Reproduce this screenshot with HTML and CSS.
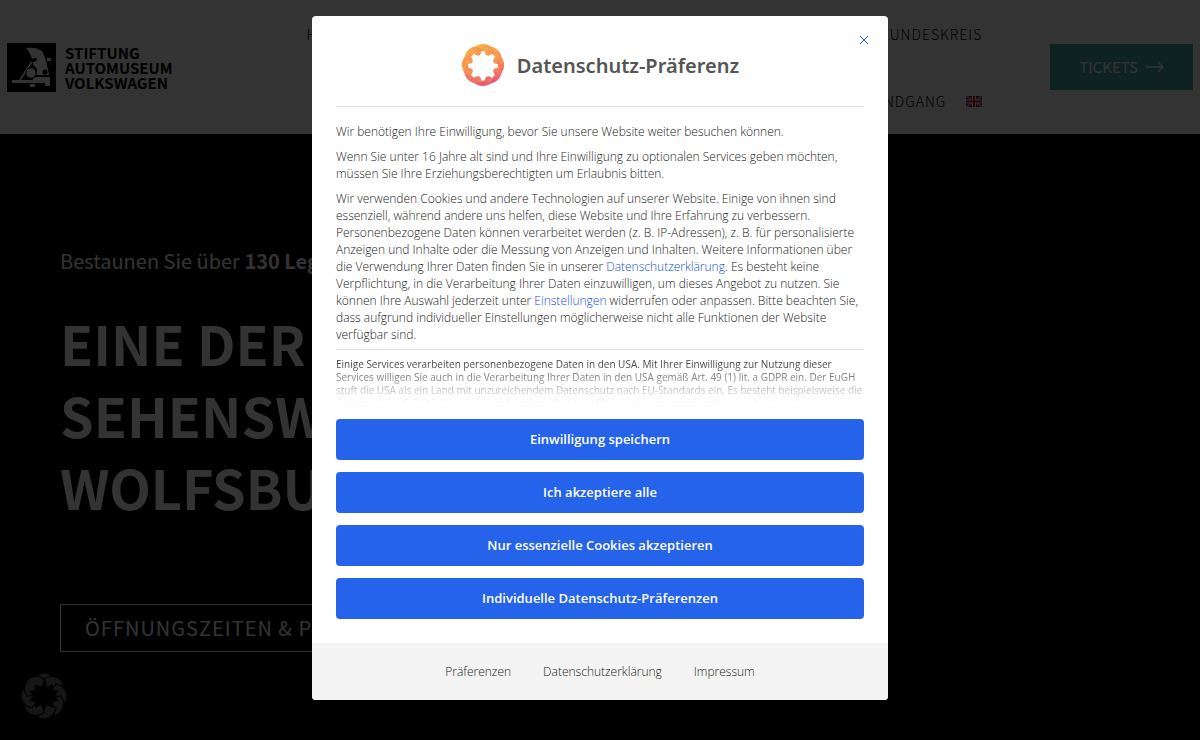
FILE: index.html
```html
<!DOCTYPE html>
<html lang="de">
<head>
<meta charset="utf-8">
<meta name="viewport" content="width=device-width, initial-scale=1">
<title>Stiftung Automuseum Volkswagen</title>
<link rel="stylesheet" href="styles.css">
</head>
<body>
<svg class="defs" width="0" height="0" aria-hidden="true">
  <defs>
    <linearGradient id="warm" gradientUnits="userSpaceOnUse" x1="16" y1="3" x2="28" y2="44">
      <stop offset="0" stop-color="#fdb83c"/><stop offset=".5" stop-color="#fb9550"/><stop offset="1" stop-color="#e5487c"/>
    </linearGradient>
    <linearGradient id="shade" x1="0" y1="0" x2="1" y2="0">
      <stop offset="0" stop-color="#ffd84d" stop-opacity=".25"/><stop offset="1" stop-color="#e5486a" stop-opacity=".3"/>
    </linearGradient>
    <path id="petal" d="M12 12C14 3 22 -1 29 2C35 5 37 10 34 17L28 20L20 18Z"/>
    <path id="gear" d="M22 9h4l1 4 3 1 4-2 3 3-2 4 1 3 4 1v4l-4 1-1 3 2 4-3 3-4-2-3 1-1 4h-4l-1-4-3-1-4 2-3-3 2-4-1-3-4-1v-4l4-1 1-3-2-4 3-3 4 2 3-1z"/>
    <mask id="hole"><path fill="#fff" d="M0 0h48v48H0z"/><use href="#gear" fill="#000"/></mask>
    <mask id="small-hole"><path fill="#fff" d="M0 0h48v48H0z"/><path fill="#000" d="M24 9l3 6 6-3 0 6 6 1-4 5 4 5-6 1 0 6-6-3-3 6-3-6-6 3 0-6-6-1 4-5-4-5 6-1 0-6 6 3z"/></mask>
  </defs>
</svg>

<header class="site-header">
  <a class="brand" href="#" aria-label="Stiftung Automuseum Volkswagen">
    <svg class="brand-mark" viewBox="0 0 49 49" aria-hidden="true">
      <path fill="#000" d="M0 0h49v49H0z"/>
      <path fill="#fff" d="M19 5C25 4 31 5 35 8C38 13 40 20 42 32H29C31 28 30 24 26 22L26 19C24 12 22 8 19 5Z"/>
      <path fill="none" stroke="#fff" stroke-width="1.6" d="M26 17L13 37"/>
      <path fill="#fff" d="M5 37H25L28 34H43V43H38V40H5ZM23 41h5v3h-5zM40 15h4v3h-4z"/>
      <circle cx="24" cy="30" r="5.2" fill="#fff" stroke="#000"/>
      <circle cx="38" cy="29" r="2.6" fill="#000"/>
      <ellipse cx="27" cy="17" rx="3" ry="1.8" fill="#000" transform="rotate(-20 27 17)"/>
    </svg>
    <span class="brand-name">STIFTUNG<br>AUTOMUSEUM<br>VOLKSWAGEN</span>
  </a>
  <nav class="main-nav" aria-label="Hauptmenü">
    <div class="nav-row"><a href="#">HOME</a><a href="#">FREUNDESKREIS</a></div>
    <div class="nav-row nav-end"><a href="#">RUNDGANG</a><a href="#" aria-label="English"><svg class="flag" viewBox="0 0 16 11" aria-hidden="true"><path fill="#206" d="M0 0h16v11H0z"/><path stroke="#fff" stroke-width="2" d="M0 0l16 11M16 0L0 11"/><path stroke="#d22" d="M0 0l16 11M16 0L0 11"/><path stroke="#fff" stroke-width="4" d="M8 0v11M0 5.5h16"/><path stroke="#e11" stroke-width="2" d="M8 0v11M0 5.5h16"/></svg></a></div>
  </nav>
  <a class="tickets" href="#">TICKETS <svg viewBox="0 0 18 12" aria-hidden="true"><path d="M0 6h17M12 1l5 5-5 5"/></svg></a>
</header>

<main class="hero">
  <p class="lead">Bestaunen Sie über <b>130 Legenden</b></p>
  <h1>EINE DER<br>SEHENSWERTEN<br>WOLFSBURGS</h1>
  <a class="hours" href="#">ÖFFNUNGSZEITEN &amp; PREISE</a>
</main>

<button class="privacy-badge" type="button" aria-label="Datenschutz-Präferenzen öffnen">
  <svg viewBox="0 0 48 48" aria-hidden="true"><g mask="url(#small-hole)" fill="#6e6e6e" stroke="#000" stroke-width="1.2">
    <use href="#petal"/><use href="#petal" transform="rotate(45 24 24)"/><use href="#petal" transform="rotate(90 24 24)"/><use href="#petal" transform="rotate(135 24 24)"/><use href="#petal" transform="rotate(180 24 24)"/><use href="#petal" transform="rotate(225 24 24)"/><use href="#petal" transform="rotate(270 24 24)"/><use href="#petal" transform="rotate(315 24 24)"/>
  </g></svg>
</button>

<div class="overlay">
  <section class="dialog" role="dialog" aria-modal="true" aria-labelledby="dialog-title">
    <button class="close" type="button" aria-label="Schließen"><svg viewBox="0 0 10 10" aria-hidden="true"><path d="M1 1l8 8M9 1L1 9"/></svg></button>
    <div class="dialog-body">
      <div class="dialog-head">
        <svg class="dialog-logo" viewBox="0 0 48 48" aria-hidden="true"><g mask="url(#hole)">
          <g fill="url(#warm)"><circle cx="24" cy="24" r="22"/><circle cx="24" cy="14" r="13"/><circle cx="31" cy="17" r="13"/><circle cx="34" cy="24" r="13"/><circle cx="31" cy="31" r="13"/><circle cx="24" cy="34" r="13"/><circle cx="17" cy="31" r="13"/><circle cx="14" cy="24" r="13"/><circle cx="17" cy="17" r="13"/></g>
          <g fill="url(#shade)"><use href="#petal"/><use href="#petal" transform="rotate(45 24 24)"/><use href="#petal" transform="rotate(90 24 24)"/><use href="#petal" transform="rotate(135 24 24)"/><use href="#petal" transform="rotate(180 24 24)"/><use href="#petal" transform="rotate(225 24 24)"/><use href="#petal" transform="rotate(270 24 24)"/><use href="#petal" transform="rotate(315 24 24)"/></g>
        </g></svg>
        <h2 id="dialog-title">Datenschutz-Präferenz</h2>
      </div>
      <div class="copy">
        <p>Wir benötigen Ihre Einwilligung, bevor Sie unsere Website weiter besuchen können.</p>
        <p>Wenn Sie unter 16 Jahre alt sind und Ihre Einwilligung zu optionalen Services geben möchten, müssen Sie Ihre Erziehungsberechtigten um Erlaubnis bitten.</p>
        <p>Wir verwenden Cookies und andere Technologien auf unserer Website. Einige von ihnen sind essenziell, während andere uns helfen, diese Website und Ihre Erfahrung zu verbessern. Personenbezogene Daten können verarbeitet werden (z. B. IP-Adressen), z. B. für personalisierte Anzeigen und Inhalte oder die Messung von Anzeigen und Inhalten. Weitere Informationen über die Verwendung Ihrer Daten finden Sie in unserer <a href="#">Datenschutzerklärung</a>. Es besteht keine Verpflichtung, in die Verarbeitung Ihrer Daten einzuwilligen, um dieses Angebot zu nutzen. Sie können Ihre Auswahl jederzeit unter <a href="#">Einstellungen</a> widerrufen oder anpassen. Bitte beachten Sie, dass aufgrund individueller Einstellungen möglicherweise nicht alle Funktionen der Website verfügbar sind.</p>
      </div>
      <p class="fine-print">Einige Services verarbeiten personenbezogene Daten in den USA. Mit Ihrer Einwilligung zur Nutzung dieser Services willigen Sie auch in die Verarbeitung Ihrer Daten in den USA gemäß Art. 49 (1) lit. a GDPR ein. Der EuGH stuft die USA als ein Land mit unzureichendem Datenschutz nach EU-Standards ein. Es besteht beispielsweise die Gefahr, dass US-Behörden personenbezogene Daten in Überwachungsprogrammen verarbeiten, ohne</p>
      <div class="actions">
        <button type="button">Einwilligung speichern</button>
        <button type="button">Ich akzeptiere alle</button>
        <button type="button">Nur essenzielle Cookies akzeptieren</button>
        <button type="button">Individuelle Datenschutz-Präferenzen</button>
      </div>
    </div>
    <footer class="dialog-foot">
      <a href="#">Präferenzen</a><a href="#">Datenschutzerklärung</a><a href="#">Impressum</a>
    </footer>
  </section>
</div>
</body>
</html>
```
FILE: styles.css
```css
* { box-sizing: border-box; }
body {
  margin: 0;
  min-height: 100vh;
  background: #000;
  color: #fff;
  font-family: "Noto Sans CJK SC", "Open Sans", sans-serif;
  overflow: hidden;
}
a { text-decoration: none; color: inherit; }
p, h1, h2 { margin: 0; }
.defs { position: absolute; }

.site-header {
  display: flex;
  align-items: center;
  justify-content: space-between;
  height: 134px;
  padding: 0 7px;
  background: #fff;
  color: #000;
}
.brand { display: flex; align-items: center; gap: 9px; }
.brand-mark { width: 49px; height: 49px; }
.brand-name { font: 700 15px/15px "Noto Sans CJK SC", sans-serif; }
.main-nav {
  flex: 1;
  display: grid;
  gap: 43px;
  padding: 0 68px 0 134px;
  font-size: 14px;
  line-height: 24px;
  letter-spacing: 1px;
  font-weight: 300;
}
.nav-row { display: flex; justify-content: space-between; }
.nav-end { justify-content: flex-end; gap: 20px; }
.flag { width: 16px; height: 11px; }
.tickets {
  display: flex;
  align-items: center;
  gap: 8px;
  padding: 11px 29px;
  background: #46aca4;
  color: #fff;
  font-size: 15px;
  line-height: 24px;
}
.tickets svg { width: 18px; height: 12px; fill: none; stroke: currentColor; stroke-width: 1.4; }

.hero { padding: 111px 60px 0; }
.lead { font-size: 20px; line-height: 32px; }
h1 { margin-top: 30px; font-size: 54px; line-height: 72px; font-weight: 700; }
.hours {
  display: inline-block;
  margin-top: 81px;
  padding: 0 24px;
  border: 1px solid #fff;
  font-size: 20px;
  line-height: 46px;
  letter-spacing: 1px;
}
.privacy-badge {
  position: fixed;
  left: 20px;
  bottom: 20px;
  padding: 0;
  border: 0;
  background: none;
}
.privacy-badge svg { display: block; width: 48px; height: 48px; }

.overlay {
  position: fixed;
  inset: 0;
  padding: 16px;
  background: rgba(0, 0, 0, .8);
  font-family: "Open Sans", "Noto Sans", sans-serif;
}
.dialog {
  position: relative;
  max-width: 576px;
  margin: 0 auto;
  background: #fff;
  color: #555;
  border-radius: 4px;
  overflow: hidden;
}
.close {
  position: absolute;
  top: 19px;
  right: 19px;
  padding: 0;
  border: 0;
  background: none;
  color: #2563eb;
}
.close svg { display: block; width: 10px; height: 10px; fill: none; stroke: currentColor; }
.dialog-body { padding: 24px; }
.dialog-head {
  display: flex;
  align-items: center;
  justify-content: center;
  gap: 12px;
  padding: 3px 0 19px;
  margin-bottom: 16px;
  border-bottom: 1px solid #ddd;
}
.dialog-logo { width: 44px; height: 44px; }
h2 {
  padding-top: 2px;
  font: 600 20px/42px "Noto Sans", "Open Sans", sans-serif;
}
.copy {
  display: grid;
  gap: 8px;
  padding-bottom: 6px;
  border-bottom: 1px solid #ddd;
  color: #222;
  font-size: 12px;
  font-weight: 300;
  line-height: 17px;
}
.copy a { color: #1450e0; }
.fine-print {
  height: 49px;
  margin: 8px 0 12px;
  overflow: hidden;
  color: #444;
  font-size: 10px;
  line-height: 13px;
  -webkit-mask-image: linear-gradient(#000 10%, transparent 92%);
  mask-image: linear-gradient(#000 10%, transparent 92%);
}
.actions { display: grid; gap: 12px; }
.actions button {
  padding: 10px 12px;
  border: 0;
  border-radius: 4px;
  background: #2563eb;
  color: #fff;
  font: 600 13px/21px "Open Sans", sans-serif;
}
.dialog-foot {
  display: flex;
  justify-content: center;
  gap: 32px;
  padding: 20px 24px;
  background: #f3f3f3;
  color: #222;
  font-size: 12px;
  font-weight: 300;
  line-height: 17px;
}
```
